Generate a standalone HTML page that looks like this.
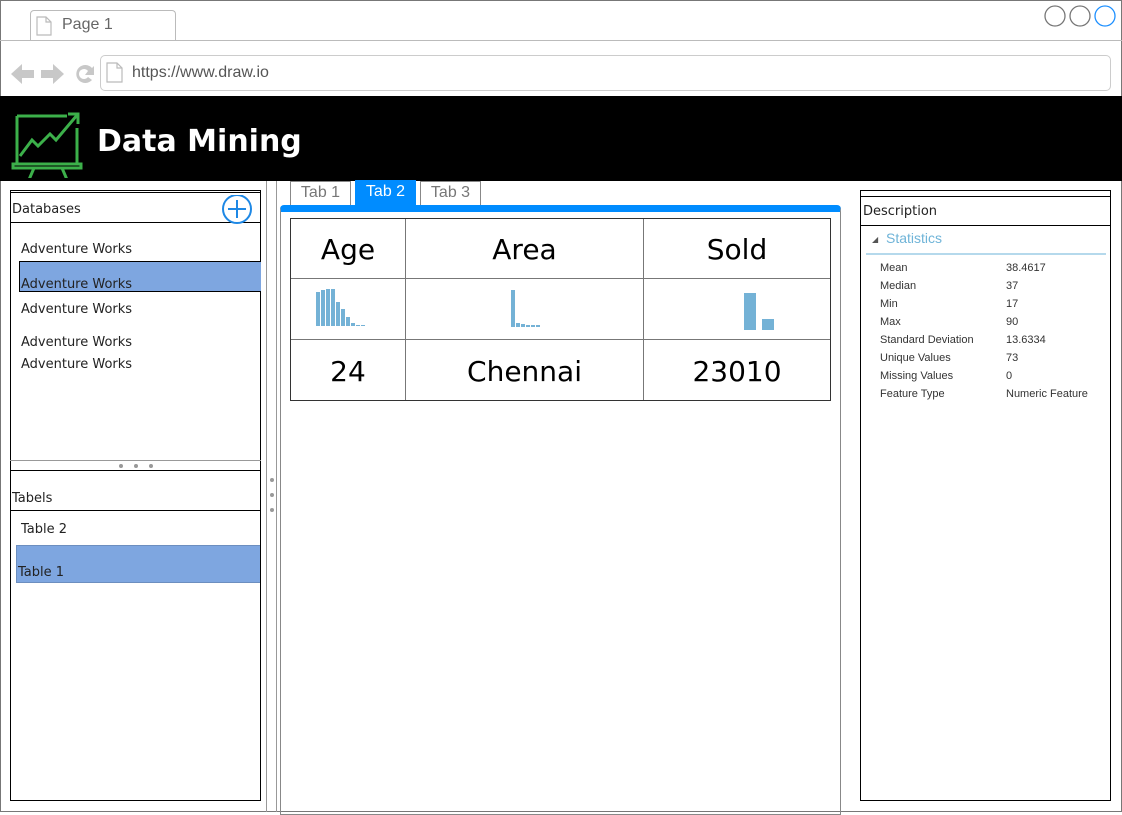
<!DOCTYPE html>
<html><head><style>
*{margin:0;padding:0;box-sizing:border-box}
body{width:1122px;height:812px;position:relative;background:#fff;font-family:"DejaVu Sans","Liberation Sans",sans-serif;overflow:hidden}
.a{position:absolute}
.t{font-size:13px;color:#222;white-space:nowrap}
.s{font-family:"Liberation Sans",sans-serif;font-size:11px;color:#333;white-space:nowrap}
.bar{position:absolute;background:#74b2d6;bottom:0}
</style></head><body>
<div class="a" style="left:0;top:0;width:1122px;height:812px;border:1px solid #777"></div>
<div class="a" style="left:30px;top:10px;width:146px;height:31px;border:1px solid #bbb;border-bottom:none;border-radius:4px 4px 0 0;background:#fff"></div>
<div class="a" style="left:0;top:40px;width:1122px;height:1px;background:#bbb"></div>
<svg class="a" style="left:36px;top:16px" width="16" height="20"><path d="M1 1H10L15 6V19H1Z M10 1V6H15" fill="none" stroke="#bbb" stroke-width="1.2"/></svg>
<div class="a" style="left:62px;top:16px;font-family:'Liberation Sans',sans-serif;font-size:16px;color:#666">Page 1</div>
<svg class="a" style="left:1044px;top:5px" width="74" height="22"><circle cx="11" cy="11" r="10" fill="none" stroke="#777" stroke-width="1.3"/><circle cx="36" cy="11" r="10" fill="none" stroke="#777" stroke-width="1.3"/><circle cx="61" cy="11" r="10" fill="none" stroke="#1e90ff" stroke-width="1.3"/></svg>
<svg class="a" style="left:10px;top:60px" width="88" height="28"><path d="M1 14L12 4V10H24V18H12V24Z" fill="#c8c8c8"/><path d="M54 14L43 4V10H31V18H43V24Z" fill="#c8c8c8"/><path d="M82 8A9 9 0 1 0 82 20L78 17A5 5 0 1 1 78 11L75 15H84V6Z" fill="#c8c8c8"/></svg>
<div class="a" style="left:100px;top:55px;width:1011px;height:36px;border:1px solid #ccc;border-radius:5px"></div>
<svg class="a" style="left:106px;top:62px" width="18" height="22"><path d="M1 1H11L16 6V20H1Z M11 1V6H16" fill="none" stroke="#bbb" stroke-width="1.2"/></svg>
<div class="a" style="left:132px;top:64px;font-family:'Liberation Sans',sans-serif;font-size:16px;color:#555">https://www.draw.io</div>
<div class="a" style="left:0;top:96px;width:1122px;height:85px;background:#000"></div>
<svg class="a" style="left:10px;top:106px" width="75" height="72" fill="none" stroke="#3cb04a" stroke-width="3"><path d="M7 10V57M7 10H57M67 22V57M3 58H71V62H3Z"/><path d="M10 50L22 34L28 40L40 28L46 34L68 8M58 8H68V18"/><path d="M24 62L18 76M52 62L58 76"/></svg>
<div class="a" style="left:97px;top:124px;font-size:30px;font-weight:bold;color:#fff">Data Mining</div>
<div class="a" style="left:10px;top:190px;width:251px;height:611px;border:1px solid #000"></div>
<div class="a" style="left:10px;top:192px;width:251px;height:31px;border-top:1px solid #000;border-bottom:1px solid #000"></div>
<div class="a t" style="left:12px;top:202px">Databases</div>
<svg class="a" style="left:221px;top:195px" width="34" height="30"><circle cx="16" cy="14" r="14" fill="none" stroke="#1e88e5" stroke-width="2"/><path d="M16 5V23M7 14H25" stroke="#1e88e5" stroke-width="2"/></svg>
<div class="a t" style="left:21px;top:242px">Adventure Works</div>
<div class="a" style="left:19px;top:261px;width:242px;height:31px;background:#7ea6e0;border:1px solid #000;border-right:none"></div>
<div class="a t" style="left:21px;top:277px">Adventure Works</div>
<div class="a t" style="left:21px;top:302px">Adventure Works</div>
<div class="a t" style="left:21px;top:335px">Adventure Works</div>
<div class="a t" style="left:21px;top:357px">Adventure Works</div>
<div class="a" style="left:10px;top:460px;width:251px;height:11px;border-top:1px solid #999;border-bottom:1px solid #000"></div>
<div class="a" style="left:118px;top:464px;width:50px;height:4px;font-size:0">
<span class="a" style="left:1px;width:4px;height:4px;border-radius:2px;background:#999"></span><span class="a" style="left:16px;width:4px;height:4px;border-radius:2px;background:#999"></span><span class="a" style="left:31px;width:4px;height:4px;border-radius:2px;background:#999"></span></div>
<div class="a" style="left:10px;top:510px;width:251px;height:1px;background:#000"></div>
<div class="a t" style="left:12px;top:491px">Tabels</div>
<div class="a t" style="left:21px;top:522px">Table 2</div>
<div class="a" style="left:16px;top:545px;width:244px;height:38px;background:#7ea6e0;border:1px solid #6c8ebf;border-right:none"></div>
<div class="a t" style="left:18px;top:565px">Table 1</div>
<div class="a" style="left:266px;top:181px;width:11px;height:631px;border-left:1px solid #999;border-right:1px solid #999"></div>
<div class="a" style="left:270px;top:478px;width:4px;height:4px;border-radius:2px;background:#999"></div>
<div class="a" style="left:270px;top:493px;width:4px;height:4px;border-radius:2px;background:#999"></div>
<div class="a" style="left:270px;top:508px;width:4px;height:4px;border-radius:2px;background:#999"></div>
<div class="a" style="left:290px;top:181px;width:61px;height:25px;border:1px solid #888;border-bottom:none;font-family:'Liberation Sans',sans-serif;font-size:16px;color:#777;text-align:center;line-height:22px">Tab 1</div>
<div class="a" style="left:355px;top:180px;width:61px;height:26px;background:#008cff;font-family:'Liberation Sans',sans-serif;font-size:16px;color:#fff;text-align:center;line-height:24px">Tab 2</div>
<div class="a" style="left:420px;top:181px;width:61px;height:25px;border:1px solid #888;border-bottom:none;font-family:'Liberation Sans',sans-serif;font-size:16px;color:#777;text-align:center;line-height:22px">Tab 3</div>
<div class="a" style="left:280px;top:205px;width:561px;height:610px;border:1px solid #888;border-top:7px solid #008cff;border-radius:4px 4px 0 0"></div>
<div class="a" style="left:290px;top:218px;width:541px;height:183px;border:1px solid #333"></div>
<div class="a" style="left:291px;top:278px;width:539px;height:1px;background:#777"></div>
<div class="a" style="left:291px;top:339px;width:539px;height:1px;background:#777"></div>
<div class="a" style="left:405px;top:219px;width:1px;height:181px;background:#777"></div>
<div class="a" style="left:643px;top:219px;width:1px;height:181px;background:#777"></div>
<div class="a" style="left:291px;top:233px;width:114px;text-align:center;font-size:28px">Age</div>
<div class="a" style="left:406px;top:233px;width:237px;text-align:center;font-size:28px">Area</div>
<div class="a" style="left:644px;top:233px;width:186px;text-align:center;font-size:28px">Sold</div>
<div class="a" style="left:291px;top:355px;width:114px;text-align:center;font-size:28px">24</div>
<div class="a" style="left:406px;top:355px;width:237px;text-align:center;font-size:28px">Chennai</div>
<div class="a" style="left:644px;top:355px;width:186px;text-align:center;font-size:28px">23010</div>
<div class="a" style="left:316px;top:285px;width:60px;height:41px">
<div class="bar" style="left:0;width:4px;height:34px"></div><div class="bar" style="left:5px;width:4px;height:36px"></div><div class="bar" style="left:10px;width:4px;height:37px"></div><div class="bar" style="left:15px;width:4px;height:37px"></div><div class="bar" style="left:20px;width:4px;height:24px"></div><div class="bar" style="left:25px;width:4px;height:17px"></div><div class="bar" style="left:30px;width:4px;height:9px"></div><div class="bar" style="left:35px;width:4px;height:3px"></div><div class="bar" style="left:40px;width:4px;height:1px"></div><div class="bar" style="left:45px;width:4px;height:1px"></div></div>
<div class="a" style="left:511px;top:285px;width:40px;height:42px">
<div class="bar" style="left:0;width:4px;height:37px"></div><div class="bar" style="left:5px;width:4px;height:4px"></div><div class="bar" style="left:10px;width:4px;height:3px"></div><div class="bar" style="left:15px;width:4px;height:2px"></div><div class="bar" style="left:20px;width:4px;height:2px"></div><div class="bar" style="left:25px;width:4px;height:2px"></div></div>
<div class="a" style="left:744px;top:293px;width:32px;height:37px">
<div class="bar" style="left:0;width:12px;height:37px"></div><div class="bar" style="left:18px;width:12px;height:11px"></div></div>
<div class="a" style="left:860px;top:190px;width:251px;height:611px;border:1px solid #000"></div>
<div class="a" style="left:860px;top:196px;width:251px;height:30px;border-top:1px solid #000;border-bottom:1px solid #000"></div>
<div class="a t" style="left:863px;top:204px">Description</div>
<div class="a" style="left:872px;top:235px;font-size:8px;color:#555">◢</div>
<div class="a" style="left:886px;top:230px;font-family:'Liberation Sans',sans-serif;font-size:14px;color:#6fb4d8">Statistics</div>
<div class="a" style="left:866px;top:253px;width:240px;height:2px;background:#b5d9ec"></div>
<div class="a s" style="left:880px;top:259px;line-height:18px">Mean<br>Median<br>Min<br>Max<br>Standard Deviation<br>Unique Values<br>Missing Values<br>Feature Type</div>
<div class="a s" style="left:1006px;top:259px;line-height:18px">38.4617<br>37<br>17<br>90<br>13.6334<br>73<br>0<br>Numeric Feature</div>
</body></html>
